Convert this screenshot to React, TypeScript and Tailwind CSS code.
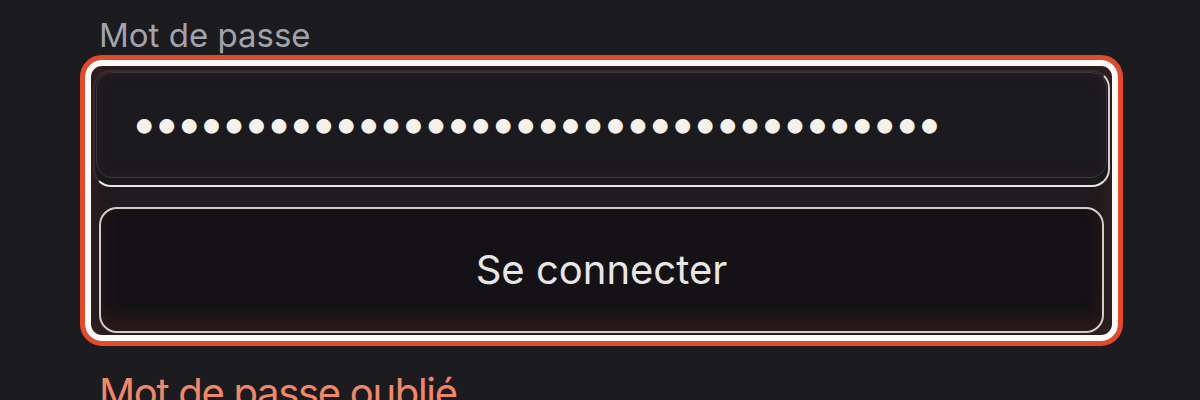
import React from "react";

const PasswordField = () => {
  return (
    <div className="rounded-[18px] border-2 border-t-[#3a2c2e] border-l-[#3a2c2e] border-r-[#d9d0cc] border-b-[#ebe5e2] bg-[#1a191d]">
      <div className="mx-[1px] mb-[7px] rounded-[16px] border border-[#38363b] bg-[#1b1a1e] shadow-[inset_0_0_14px_rgba(90,40,40,0.25)]">
        <input
          type="password"
          readOnly
          value="Motdepasse-Secret-2024-Connexion-OK!"
          className="h-[104px] w-full bg-transparent pb-[6px] pl-[34px] pr-6 text-[47px] tracking-[-4px] text-[#f6f1ea] outline-none"
          style={{ fontFamily: "Inter, 'Noto Sans', sans-serif" }}
        />
      </div>
    </div>
  );
};

export default function App() {
  return (
    <div
      className="h-[400px] w-[1200px] overflow-hidden bg-[#1c1b20]"
      style={{ fontFamily: "Inter, 'Noto Sans', sans-serif" }}
    >
      <div className="ml-[80px] w-[1043px] pt-[15px]">
        {/* Label */}
        <label className="block pl-[19px] text-[33px] leading-[40px] text-[#a0a4ab]">
          Mot de passe
        </label>

        {/* Highlighted group */}
        <div className="rounded-[22px] border-[5px] border-[#e34a2b]">
          <div className="rounded-[17px] border-[6px] border-[#fdfbfa] bg-[#1f1b1e] shadow-[inset_0_0_24px_rgba(110,45,35,0.35)]">
            <div className="flex flex-col gap-[20px] px-[2px] pt-[4px] pb-[2px]">
              <PasswordField />
              <div className="mx-[6px]">
                <button className="h-[126px] w-full rounded-[18px] border-2 border-[#d3cbc8] bg-[#141216] text-[40px] text-[#e8e6e4] shadow-[inset_0_-10px_18px_rgba(110,45,35,0.3)]">
                  Se connecter
                </button>
              </div>
            </div>
          </div>
        </div>

        {/* Forgot link */}
        <a className="mt-[23px] block pl-[19px] text-[40px] leading-[48px] tracking-[-1.3px] text-[#ef8868]">
          Mot de passe oublié
        </a>
      </div>
    </div>
  );
}
